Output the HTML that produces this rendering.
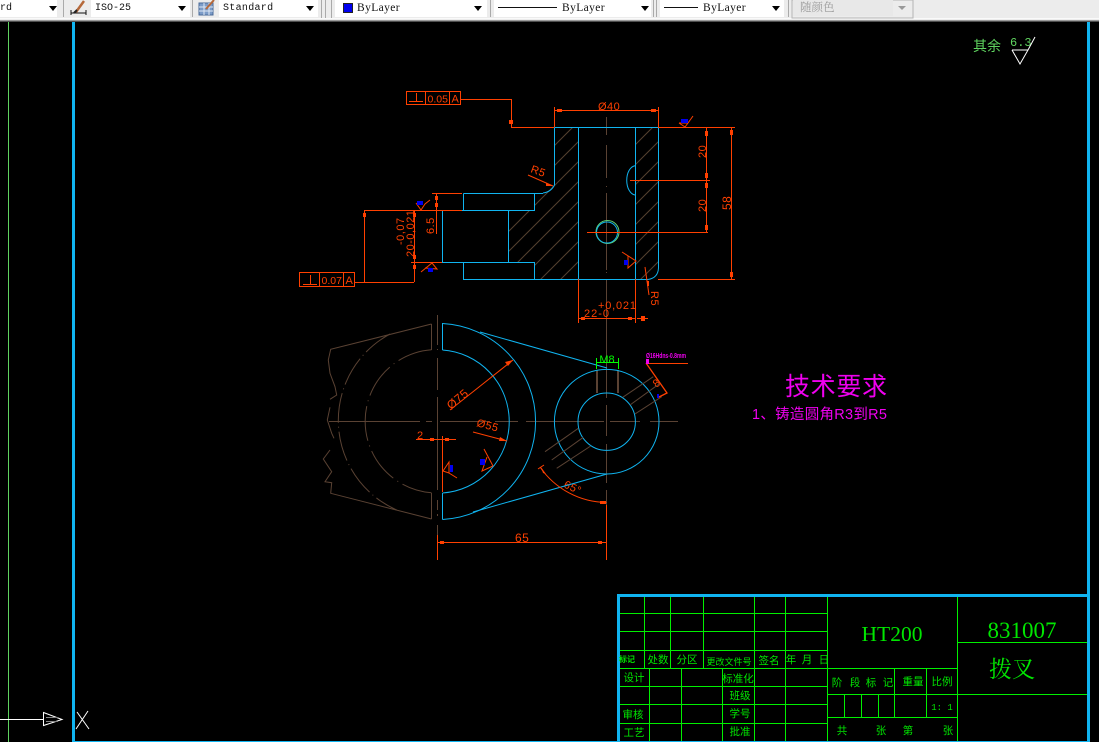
<!DOCTYPE html>
<html>
<head>
<meta charset="utf-8">
<style>
html,body{margin:0;padding:0;background:#000;width:1099px;height:742px;overflow:hidden}
svg{display:block}
.o{stroke:#ff4000;fill:none}
.c{stroke:#10b4f0;fill:none}
.b{stroke:#5a4233;fill:none}
.g{stroke:#00f000;fill:none}
.dt{font-family:"Liberation Sans",sans-serif;fill:#ff4000;font-size:11px;letter-spacing:.5px}
.tb{font-family:"Liberation Mono",monospace;font-size:10px;fill:#111}
.ts{font-family:"Liberation Serif",serif;font-size:11.5px;fill:#111}
.t{font-family:"Noto Sans CJK SC","WenQuanYi Zen Hei",sans-serif;font-size:10.5px;fill:#00e600;text-anchor:middle}
.tr{font-family:"Liberation Serif","Noto Serif CJK SC",serif;fill:#00e600;text-anchor:middle}
</style>
</head>
<body>
<svg width="1099" height="742" viewBox="0 0 1099 742" xmlns="http://www.w3.org/2000/svg">
<defs>
<pattern id="h" patternUnits="userSpaceOnUse" width="20" height="20"><path d="M0 20L20 0M-2 2L2 -2M18 22L22 18" stroke="#54402f" stroke-width="1" fill="none"/></pattern>
<clipPath id="c1"><polygon points="554,128 578,128 578,279 534,279 534,262 508,262 508,210 534,210 534,193 543,193 554,185"/></clipPath>
<clipPath id="c2"><polygon points="635,128 658,128 658,268 648,279 635,279"/></clipPath>
</defs>
<rect width="1099" height="742" fill="#000"/>

<!-- toolbar -->
<rect width="1099" height="20" fill="#ececec"/>
<rect y="18" width="1099" height="1" fill="#fafafa"/>
<rect y="20" width="1099" height="1.5" fill="#9c9c9c"/>
<rect x="0" y="0" width="57" height="17" fill="#fff"/>
<rect x="91" y="0" width="99" height="17" fill="#fff"/>
<rect x="219" y="0" width="99" height="17" fill="#fff"/>
<rect x="335" y="0" width="152" height="17" fill="#fff"/>
<rect x="494" y="0" width="157" height="17" fill="#fff"/>
<rect x="660" y="0" width="124" height="17" fill="#fff"/>
<rect x="792" y="0" width="121" height="18" fill="#ececec" stroke="#b5b5b5"/>
<rect x="793" y="0" width="100" height="16" fill="#e8e8e8"/>
<g fill="#aaa">
<rect x="63" y="0" width="1" height="17"/><rect x="192" y="0" width="1" height="17"/><rect x="321" y="0" width="1" height="18"/><rect x="325" y="0" width="1" height="18"/><rect x="331" y="0" width="1" height="18"/><rect x="490" y="0" width="1" height="17"/><rect x="653" y="0" width="1" height="17"/><rect x="656" y="0" width="1" height="17"/><rect x="788" y="0" width="1" height="17"/>
</g>
<g fill="#000">
<polygon points="49,6 57,6 53,11"/><polygon points="178,6 186,6 182,11"/><polygon points="306,6 314,6 310,11"/><polygon points="474,6 482,6 478,11"/><polygon points="641,6 649,6 645,11"/><polygon points="772,6 780,6 776,11"/>
</g>
<polygon points="898,6 906,6 902,10" fill="#999"/>
<text x="0" y="10" class="tb">rd</text>
<text x="95" y="10" class="tb">ISO-25</text>
<text x="223" y="10" class="tb" letter-spacing=".3">Standard</text>
<rect x="343.500" y="3.500" width="9" height="9" fill="#0000f0" stroke="#222"/>
<text x="357" y="11" class="ts" letter-spacing=".4">ByLayer</text>
<line x1="498" y1="7.500" x2="557" y2="7.500" stroke="#111"/>
<text x="562" y="11" class="ts" letter-spacing=".4">ByLayer</text>
<line x1="664" y1="7.500" x2="698" y2="7.500" stroke="#111"/>
<text x="703" y="11" class="ts" letter-spacing=".4">ByLayer</text>
<text x="800" y="11" font-family="Noto Serif CJK SC,serif" font-size="11.500" fill="#999">随颜色</text>
<!-- dim icon -->
<path d="M71 13H86M71 10V15M86 10V15" stroke="#111" fill="none"/>
<path d="M76 12L84 1" stroke="#b5683a" stroke-width="2.500"/>
<path d="M74 13L77 10" stroke="#222" stroke-width="2"/>
<!-- table icon -->
<rect x="199" y="3" width="14" height="12" fill="#7c9cc8" stroke="#4a6a98"/>
<path d="M199 7H213M199 11H213M204 3V15M209 3V15" stroke="#dfe8f4"/>
<path d="M206 9L214 0" stroke="#b5683a" stroke-width="2"/>

<g shape-rendering="crispEdges">
<!-- frame -->
<line x1="8.500" y1="22" x2="8.500" y2="742" stroke="#5fd35f"/>
<rect x="72" y="22" width="3" height="720" fill="#10b4f0"/>
<rect x="1087" y="22" width="3" height="720" fill="#10b4f0"/>
<rect x="75" y="741" width="1015" height="1" fill="#10b4f0"/>
<rect x="618" y="594" width="472" height="3" fill="#10b4f0"/>
<rect x="617" y="594" width="3" height="148" fill="#10b4f0"/>

<!-- title block -->
<path class="g" d="M620 613.500H827M620 631.500H827M620 650.500H827M620 668.500H957M620 686.500H827M620 704.500H827M620 723.500H827
M644.500 597V668M670.500 597V668M703.500 597V668M754.500 597V741M785.500 597V741M827.500 597V741
M649.500 668V741M681.500 668V741M722.500 668V741
M957.500 597V741M957 642.500H1087M827 694.500H1087M827 717.500H957M894.500 668V717M926.500 668V717M844.500 694V717M861.500 694V717M878.500 694V717"/>
</g>
<g>
<text x="627" y="662" class="t" font-weight="bold" style="font-size:8px">标记</text>
<text x="658" y="663" class="t">处数</text>
<text x="687" y="663" class="t">分区</text>
<text x="729" y="665" class="t" style="font-size:9px">更改文件号</text>
<text x="769" y="664" class="t">签名</text>
<text x="791" y="663" class="t">年</text><text x="807" y="663" class="t">月</text><text x="824" y="663" class="t">日</text>
<text x="634" y="681" class="t">设计</text>
<text x="738" y="682" class="t">标准化</text>
<text x="740" y="699" class="t">班级</text>
<text x="633" y="718" class="t">审核</text>
<text x="740" y="717" class="t">学号</text>
<text x="634" y="736" class="t">工艺</text>
<text x="740" y="735" class="t">批准</text>
<text x="837" y="686" class="t">阶</text><text x="855" y="686" class="t">段</text><text x="871" y="686" class="t">标</text><text x="888" y="686" class="t">记</text>
<text x="913" y="685" class="t">重量</text>
<text x="942" y="685" class="t">比例</text>
<text x="942" y="710" class="t" style="font-size:9px;font-family:'Liberation Mono',monospace">1: 1</text>
<text x="842" y="734" class="t">共</text><text x="881" y="734" class="t">张</text><text x="908" y="734" class="t">第</text><text x="948" y="734" class="t">张</text>
<text x="892" y="641" class="tr" font-size="21.500">HT200</text>
<text x="1022" y="638" class="tr" font-size="23">831007</text>
<text x="1012" y="677" class="tr" font-size="23">拨叉</text>
</g>

<!-- other text top right -->
<text x="973" y="51" font-family="Noto Sans CJK SC,sans-serif" font-size="14" fill="#5fd35f">其余</text>
<text x="1010" y="46" font-family="Liberation Mono,monospace" font-size="12" fill="#5fd35f">6.3</text>
<path d="M1012 50H1028L1020 64L1012 50M1028 50L1035 37" stroke="#fff" fill="none"/>

<!-- arrow & UCS -->
<path d="M0 719.500H43M43.500 712.500V725.500L62 719.500Z" stroke="#fff" fill="none"/>
<path d="M46 717.500H58M46 721.500H58" stroke="#888"/>
<path d="M77 712L89 729M88 711L76 729" stroke="#fff" fill="none"/>

<!-- hatch -->
<rect x="500" y="120" width="170" height="165" fill="url(#h)" clip-path="url(#c1)"/>
<rect x="500" y="120" width="170" height="165" fill="url(#h)" clip-path="url(#c2)"/>

<!-- centre lines -->
<g shape-rendering="crispEdges">
<path class="b" d="M606.500 117V135M606.500 145V178M606.500 186V187M606.500 193V270M606.500 272V273M606.500 280V330"/>
<path class="b" d="M329 421.500H420M426 421.500H432M440 421.500H490M495 421.500H518M526 421.500H604M610 421.500H640M650 421.500H678"/>
<path class="b" d="M437.500 315V345M437.500 349V350M437.500 358V390M437.500 397V490M437.500 500V510M437.500 514V516M437.500 525V560"/>
<path class="b" d="M606.500 320V398M606.500 405V436M606.500 444V483M606.500 490V510M606.500 515V520"/>
<path class="b" stroke-width="2" d="M597 370V393M618 370V393"/>
</g>

<!-- top view -->
<g shape-rendering="crispEdges">
<path class="c" d="M554.500 127.500H658.500V268M554.500 127.500V185M578.500 127.500V279.500M635.500 127.500V279.500M463 279.500H648
M463.500 193.500H543M463.500 193.500V210.500M442.500 210.500H534.500V193.500M442.500 210.500V262.500H534.500V279.500M463.500 262.500V279.500M508.500 210.500V262.500"/>
</g>
<path class="c" d="M543 193Q551 192 554.500 185M658.500 268Q658 278 648 279.500"/>
<path class="c" d="M635 165.700A9 14.700 0 0 0 635 195"/>
<circle cx="607.500" cy="232" r="11.500" stroke="#60d070" fill="none"/>
<circle cx="607" cy="232.500" r="10.500" class="c"/>
<g shape-rendering="crispEdges">
<path class="o" d="M554.500 107V127M658.500 107V127M554 110.500H658
M658 127.500H735M658 279.500H735M706.500 127V232M731.500 127V279
M630 180.500H710M587 232.500H708
M578.500 279V323M635.500 279V323M578 318.500H635M637 318.500H648
M432 193.500H462M364 210.500H462M436.500 193V234M364.500 210V282M414.500 210V282M411 262.500H442M355 282.500H414
M461 99.500H511.500V127.500H554"/>
<rect x="406.500" y="91.500" width="54" height="13" class="o"/><path class="o" d="M425.500 91V105M449.500 91V105"/>
<rect x="299.500" y="272.500" width="55" height="14" class="o"/><path class="o" d="M319.500 272V287M343.500 272V287"/>
<path class="o" d="M409 101.500H423M416.500 93V101M303 284.500H317M310.500 275V284"/>
<g fill="#ff4000">
<rect x="557" y="109" width="5" height="3"/><rect x="651" y="109" width="5" height="3"/>
<rect x="705" y="131" width="3" height="5"/><rect x="705" y="173" width="3" height="5"/><rect x="705" y="183" width="3" height="5"/><rect x="705" y="225" width="3" height="5"/>
<rect x="730" y="130" width="3" height="5"/><rect x="730" y="272" width="3" height="5"/>
<rect x="581" y="317" width="4" height="3"/><rect x="628" y="317" width="4" height="3"/><rect x="641" y="316" width="4" height="5"/>
<rect x="435" y="196" width="3" height="4"/><rect x="435" y="203" width="3" height="4"/>
<rect x="363" y="213" width="3" height="4"/><rect x="413" y="213" width="3" height="4"/><rect x="413" y="255" width="3" height="4"/><rect x="413" y="265" width="3" height="4"/>
<rect x="509" y="120" width="4" height="4"/>
</g>
</g>
<path class="o" d="M528 175L553 186M645 267L649 295"/>
<polygon points="546,183 553,186 546,186" fill="#ff4000"/>
<rect x="647" y="281" width="2" height="5" fill="#ff4000"/>

<g class="dt">
<text x="598" y="110" class="dt">Ø40</text>
<text x="427.500" y="102.500" class="dt" style="font-size:10.500px;letter-spacing:0">0.05</text><text x="451.500" y="102.500" class="dt" style="font-size:11px;letter-spacing:0">A</text>
<text x="321.500" y="284" class="dt" style="font-size:10.500px;letter-spacing:0">0.07</text><text x="345.500" y="284" class="dt" style="font-size:11px;letter-spacing:0">A</text>
<text x="598" y="309" class="dt" style="letter-spacing:.8px">+0,021</text>
<text x="584" y="317" class="dt" style="letter-spacing:1px">22-0</text>
<text transform="translate(706,158) rotate(-90)" class="dt">20</text>
<text transform="translate(706,212) rotate(-90)" class="dt">20</text>
<text transform="translate(731,210) rotate(-90)" class="dt" style="font-size:12px">58</text>
<text transform="translate(434,234) rotate(-90)" class="dt">6.5</text>
<text transform="translate(404,245) rotate(-90)" class="dt">-0,07</text>
<text transform="translate(414,257) rotate(-90)" class="dt">20-0,021</text>
<text transform="translate(530,172) rotate(20)" class="dt">R5</text>
<text transform="translate(651,291) rotate(90)" class="dt">R5</text>
<text transform="translate(451,410) rotate(-40)" class="dt" style="font-size:12px">Ø75</text>
<text transform="translate(476,426) rotate(15)" class="dt">Ø55</text>
<text x="417" y="439" class="dt">2</text>
<text x="515" y="542" class="dt" style="font-size:12px">65</text>
<text transform="translate(563,487) rotate(25)" class="dt">65°</text>
<text transform="translate(656,388) rotate(-35)" class="dt">8</text>
</g>

<!-- surface marks -->
<g class="o">
<path d="M416 203L421 210L425 204L430 200"/>
<path d="M421 272L432 263L437 269L425 268"/>
<path d="M679 123L685 127L688 123L693 116M679 123H688"/>
<path d="M622 252L636 261L628 268V256"/>
<path d="M443 471L449 462V473L457 478M443 471L449 473"/>
<path d="M484 449L493 466L482 471L487 457"/>
</g>
<g fill="#0000f0">
<rect x="417" y="201" width="6" height="4"/><rect x="428" y="268" width="5" height="4"/><rect x="681" y="119" width="7" height="4"/><rect x="624" y="260" width="4" height="5"/><rect x="450" y="465" width="3" height="7"/><rect x="480" y="459" width="5" height="6"/><rect x="657" y="394" width="2" height="4"/>
</g>

<!-- lower view right half -->
<g shape-rendering="crispEdges"><path class="c" d="M442.500 323V350M442.500 493V519.500"/></g>
<path class="c" d="M442.500 323.500A98.130 98.130 0 0 1 442.500 519.500"/>
<path class="c" d="M442.500 350A71.670 71.670 0 0 1 442.500 493"/>
<path class="c" d="M480 332L607 368M473 512L607 474"/>
<circle cx="606.700" cy="421.700" r="52.300" class="c"/>
<circle cx="606.700" cy="421.700" r="28.700" class="c"/>

<!-- lower view left half -->
<g class="b">
<path d="M431.500 324V350M431.500 493V519M431.500 324L330.700 349.300L328.300 360L330 373.300L335 386.700L336.700 395L330 399.300M330 407.300L327.300 420L331.700 433.300L334 438.300M330 450L323.300 459L331.700 471.700L325 481.700L331.700 482.700L330.700 493.300L431.500 519"/>
<path d="M390 334A98 98 0 0 0 396.700 510" stroke-dasharray="30 4 1 4"/>
<path d="M431.500 349.700A71.700 71.700 0 0 0 431.500 492.700" stroke-dasharray="35 5 1 5"/>
<path d="M622.700 397.300L653.300 376.700M630 405L660 383.300M635 414L661.700 396.700M578.300 428.300L545 451.700M583.300 437.300L551.700 460M590.700 446L556.700 468.300"/>
</g>

<!-- lower dims -->
<g shape-rendering="crispEdges">
<path class="o" d="M442.500 436V492M416 439.500H456M437.500 535V560M437 542.500H606M606.500 505V560"/>
<g fill="#ff4000"><rect x="430" y="438" width="4" height="3"/><rect x="445" y="438" width="4" height="3"/><rect x="440" y="541" width="4" height="3"/><rect x="598" y="541" width="4" height="3"/></g>
<path d="M646 363.500H688" stroke="#ff4000"/>
<path stroke="#00ff00" fill="none" d="M597 362.500H618M596.500 358V369M618.500 358V369"/>
</g>
<path class="o" d="M450 410L513 360M473 432L507 441"/>
<polygon points="513,360 505,362 508,366" fill="#ff4000"/>
<polygon points="507,441 500,437 499,441" fill="#ff4000"/>
<path class="o" d="M540 467A82 82 0 0 0 606.500 502.500M538 469L544 465"/>
<polygon points="541,467 546,474 543,473" fill="#ff4000"/>
<rect x="600" y="501" width="6" height="3" fill="#ff4000"/>
<path class="o" d="M646 363L667 393L659 397" stroke-width="1.300"/>
<text x="607" y="363" font-family="Liberation Sans,sans-serif" font-size="11" fill="#00ff00" text-anchor="middle">M8</text>
<rect x="646" y="359" width="3" height="5" fill="#f000f0"/>
<text x="646" y="358" font-family="Liberation Sans,sans-serif" font-size="7" font-weight="bold" fill="#f000f0" textLength="40" lengthAdjust="spacingAndGlyphs">Ø16Hdns-0.8mm</text>

<!-- tech text -->
<text x="785" y="395" font-family="Noto Sans CJK SC,sans-serif" font-size="25" fill="#f000f0" textLength="102">技术要求</text>
<text x="752" y="419" font-family="Liberation Sans,Noto Sans CJK SC,sans-serif" font-size="14.500" fill="#f000f0" textLength="135">1、铸造圆角R3到R5</text>
</svg>
</body>
</html>
